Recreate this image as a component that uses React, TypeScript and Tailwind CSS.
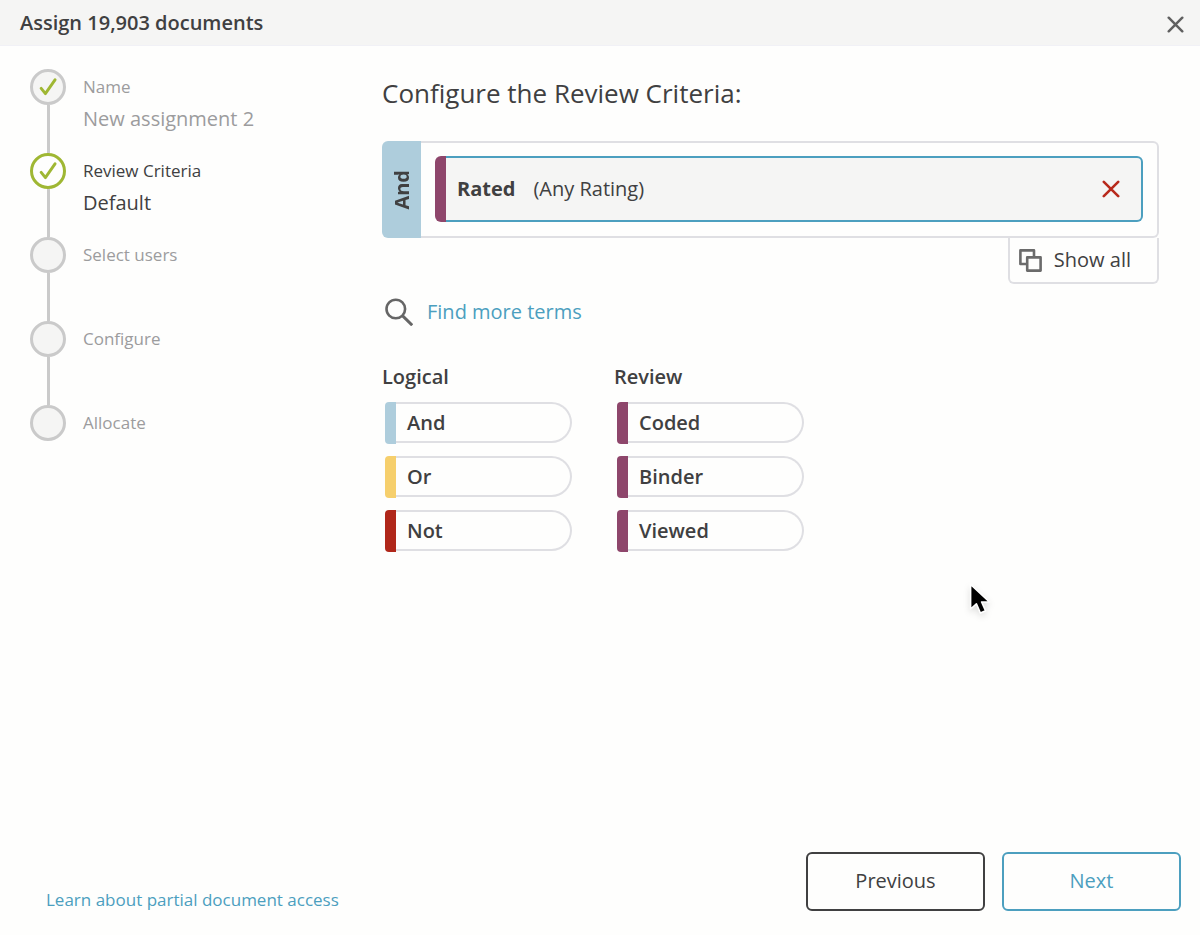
import React, { useState } from "react";
import clsx from "clsx";

interface Step {
  label: string;
  value?: string;
  done: boolean;
}

interface Term {
  name: string;
  color: string;
}

const steps: Step[] = [
  { label: "Name", value: "New assignment 2", done: true },
  { label: "Review Criteria", value: "Default", done: true },
  { label: "Select users", done: false },
  { label: "Configure", done: false },
  { label: "Allocate", done: false },
];

const termGroups: { title: string; terms: Term[] }[] = [
  {
    title: "Logical",
    terms: [
      { name: "And", color: "bg-[#aecddc]" },
      { name: "Or", color: "bg-[#f6cf6c]" },
      { name: "Not", color: "bg-[#b0271a]" },
    ],
  },
  {
    title: "Review",
    terms: [
      { name: "Coded", color: "bg-[#8e466b]" },
      { name: "Binder", color: "bg-[#8e466b]" },
      { name: "Viewed", color: "bg-[#8e466b]" },
    ],
  },
];

function CloseIcon({ className }: { className?: string }) {
  return (
    <svg viewBox="0 0 18 18" fill="none" stroke="currentColor" strokeLinecap="round" className={className}>
      <path d="M1.8 1.8 L16.2 16.2 M16.2 1.8 L1.8 16.2" strokeWidth="2.6" />
    </svg>
  );
}

function CheckIcon() {
  return (
    <svg viewBox="0 0 18 18" fill="none" className="w-[18px] h-[18px] text-[#9fb733]">
      <path d="M2.2 10.4 L6.4 15.6 L16 1.8" stroke="currentColor" strokeWidth="2.9" strokeLinecap="round" strokeLinejoin="round" />
    </svg>
  );
}

function SearchIcon() {
  return (
    <svg viewBox="0 0 28 28" fill="none" stroke="#666" className="w-7 h-7">
      <circle cx="10.8" cy="11" r="9.3" strokeWidth="2.6" />
      <path d="M17.4 17.6 L27.2 27.2" strokeWidth="3" />
    </svg>
  );
}

function CopyIcon() {
  return (
    <svg viewBox="0 0 23 23" fill="none" stroke="#6b6b6b" strokeLinejoin="round" className="w-[23px] h-[23px]">
      <path d="M7.6 15 H1.4 V1.4 H15 V7.6" strokeWidth="2.6" />
      <rect x="8.2" y="8.4" width="13.4" height="13.2" strokeWidth="2.6" />
    </svg>
  );
}

function StepItem({ step, active, last }: { step: Step; active: boolean; last: boolean }) {
  return (
    <li className="flex gap-[17px]">
      <div className="flex flex-col items-center">
        <div
          className={clsx(
            "flex items-center justify-center w-9 h-9 rounded-full border-[3px]",
            active ? "border-[#9fb733] bg-[#fefefd]" : "border-[#cacaca] bg-[#f5f5f4]"
          )}
        >
          {step.done && <CheckIcon />}
        </div>
        {!last && <div className="w-[3px] h-12 bg-[#cacaca]" />}
      </div>
      <div className={active ? "text-[#404041]" : "text-[#9c9c9d]"}>
        <div className="text-[17px] leading-9">{step.label}</div>
        {step.value && <div className="text-xl leading-7">{step.value}</div>}
      </div>
    </li>
  );
}

function TermPill({ term }: { term: Term }) {
  return (
    <li>
      <button className="flex w-[187px] h-[42px] text-left">
        <span className={clsx("w-[11px] h-full rounded-l", term.color)} />
        <span className="flex-1 h-[41px] pl-[11px] leading-[38px] border-2 border-l-0 border-[#dfdfe3] rounded-r-full text-xl font-semibold">
          {term.name}
        </span>
      </button>
    </li>
  );
}

function Pointer() {
  return (
    <svg
      viewBox="0 0 24 34"
      aria-hidden="true"
      className="absolute left-[968px] top-[582px] w-6 h-[34px] pointer-events-none drop-shadow-md"
    >
      <path
        d="M2.6 2.5 V27 L8.4 21.8 L12.4 31 L17.6 28.8 L13.6 20 H21.4 Z"
        fill="#000"
        stroke="#fff"
        strokeWidth="1.6"
        strokeLinejoin="round"
      />
    </svg>
  );
}

export default function App() {
  const [activeStep] = useState(1);
  const [hasRating, setHasRating] = useState(true);

  return (
    <div className="relative flex flex-col min-h-screen bg-[#fefefd] text-[#404041] font-['Open_Sans',sans-serif]">
      <header className="flex items-center justify-between h-[46px] pl-5 pr-4 bg-[#f5f5f4] border-b border-[#f1f1f6]">
        <h1 className="text-xl font-semibold">Assign 19,903 documents</h1>
        <button aria-label="Close" className="text-[#606060] pt-1">
          <CloseIcon className="w-[17px] h-[17px]" />
        </button>
      </header>

      <div className="flex flex-1">
        <nav aria-label="Steps" className="w-[382px] shrink-0 pl-[30px] pt-[23px]">
          <ol>
            {steps.map((step, idx) => (
              <StepItem key={step.label} step={step} active={idx === activeStep} last={idx === steps.length - 1} />
            ))}
          </ol>
        </nav>

        <main className="flex-1 pr-[41px] pt-[29px]">
          <h2 className="text-[26px] leading-9">Configure the Review Criteria:</h2>

          {/* Query builder */}
          <section className="mt-[30px]">
            <div className="flex h-[97px]">
              <div className="flex items-center justify-center w-[39px] rounded-l-md bg-[#aecddc]">
                <span className="[writing-mode:vertical-rl] rotate-180 text-xl font-bold">And</span>
              </div>
              <div className="flex-1 px-3.5 py-[13px] border-2 border-l-0 border-[#dfdfe3] rounded-r-md">
                {hasRating && (
                  <div className="flex h-[66px]">
                    <span className="w-[11px] rounded-l-md bg-[#8e466b]" />
                    <div className="flex flex-1 items-center pl-[11px] pr-[21px] border-2 border-l-0 border-[#4c9fbf] rounded-r-md bg-[#f5f5f4] text-xl">
                      <span className="font-bold">Rated</span>
                      <span className="ml-[18px]">(Any Rating)</span>
                      <button
                        aria-label="Remove term"
                        onClick={() => setHasRating(false)}
                        className="ml-auto text-[#b82a1c]"
                      >
                        <CloseIcon className="w-[18px] h-[18px]" />
                      </button>
                    </div>
                  </div>
                )}
              </div>
            </div>
            <div className="flex justify-end">
              <button className="flex items-center gap-3 h-[46px] pl-[9px] pr-[26px] border-2 border-t-0 border-[#dfdfe3] rounded-b-md text-xl">
                <CopyIcon />
                Show all
              </button>
            </div>
          </section>

          <a href="#terms" className="flex items-center w-fit mt-3.5 ml-[3px] gap-3.5 text-xl text-[#4c9fbf]">
            <SearchIcon />
            Find more terms
          </a>

          {/* Available terms */}
          <div id="terms" className="flex gap-[42px] mt-[37px]">
            {termGroups.map((group) => (
              <section key={group.title}>
                <h3 className="text-xl leading-7 font-semibold">{group.title}</h3>
                <ul className="flex flex-col gap-3 mt-[11px] ml-[3px]">
                  {group.terms.map((term) => (
                    <TermPill key={term.name} term={term} />
                  ))}
                </ul>
              </section>
            ))}
          </div>
        </main>
      </div>

      <footer className="flex items-center justify-between pl-[46px] pr-[19px] pb-[23px]">
        <a href="#partial-access" className="pt-9 text-[17px] text-[#4c9fbf]">
          Learn about partial document access
        </a>
        <div className="flex gap-[17px]">
          <button className="w-[179px] h-[59px] border-2 border-[#404041] rounded-md text-xl">Previous</button>
          <button className="w-[179px] h-[59px] border-2 border-[#4c9fbf] rounded-md text-xl text-[#4c9fbf]">
            Next
          </button>
        </div>
      </footer>

      <Pointer />
    </div>
  );
}
